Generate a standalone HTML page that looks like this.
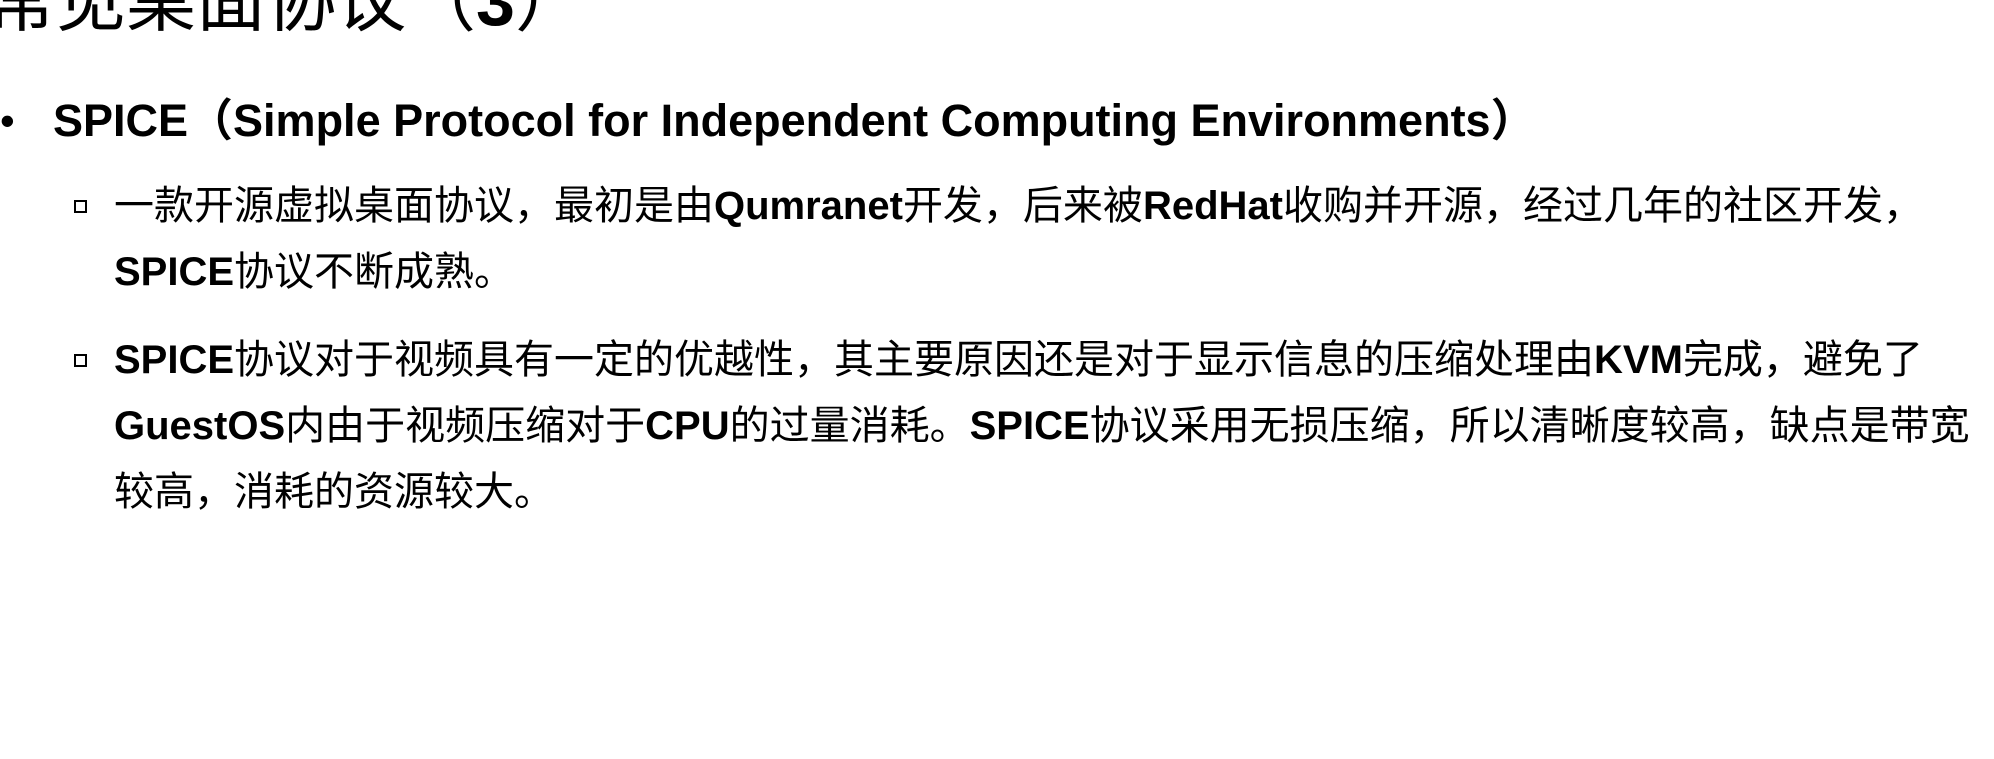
<!DOCTYPE html>
<html><head><meta charset="utf-8"><style>
html,body{margin:0;padding:0;background:#fff;width:1994px;height:759px;overflow:hidden;position:relative;}
div{position:absolute;white-space:nowrap;color:#000;font-family:"Liberation Sans","Noto Sans CJK SC",sans-serif;}
b{font-weight:bold;}
.t{left:-14px;top:-39px;font-size:70px;line-height:80px;}
.b1{left:53px;top:91px;font-size:45px;line-height:60px;font-weight:bold;}
.dot{left:0;top:91px;font-size:42px;line-height:60px;}
.sq{width:9px;height:9px;border:2px solid #000;left:74px;}
.p{left:114px;font-size:40px;line-height:66px;}
</style></head><body>
<div class="t">常见桌面协议（<b>3</b>）</div>
<div class="dot">•</div>
<div class="b1">SPICE（Simple Protocol for Independent Computing Environments）</div>
<div class="sq" style="top:200px"></div>
<div class="p" style="top:173px">一款开源虚拟桌面协议，最初是由<b>Qumranet</b>开发，后来被<b>RedHat</b>收购并开源，经过几年的社区开发，<br><b>SPICE</b>协议不断成熟。</div>
<div class="sq" style="top:354px"></div>
<div class="p" style="top:327px"><b>SPICE</b>协议对于视频具有一定的优越性，其主要原因还是对于显示信息的压缩处理由<b>KVM</b>完成，避免了<br><b>GuestOS</b>内由于视频压缩对于<b>CPU</b>的过量消耗。<b>SPICE</b>协议采用无损压缩，所以清晰度较高，缺点是带宽<br>较高，消耗的资源较大。</div>
</body></html>
